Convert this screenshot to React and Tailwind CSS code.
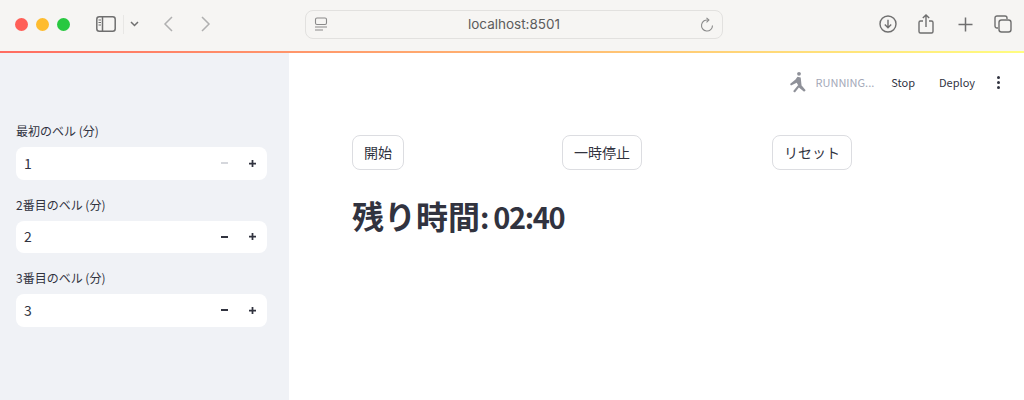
import React from "react";

const font = "font-['Noto_Sans_CJK_JP','Noto_Sans',sans-serif]";

const TrafficLights = () => (
  <div className="flex items-center gap-[8px]">
    <div className="w-[13px] h-[13px] rounded-full bg-[#ff5f57]" />
    <div className="w-[13px] h-[13px] rounded-full bg-[#febc2e]" />
    <div className="w-[13px] h-[13px] rounded-full bg-[#28c840]" />
  </div>
);

const SidebarIcon = () => (
  <svg width="20" height="16" viewBox="0 0 20 16" fill="none" stroke="#6f6f6f" strokeWidth="1.5">
    <rect x="0.8" y="0.8" width="18.4" height="14.4" rx="2.5" />
    <path d="M6.500 1v14" />
    <path d="M2.500 4h2.500M2.500 6.500h2.500M2.500 9h2.500" strokeWidth="1" />
  </svg>
);

const Chevron = ({ d, color = "#b0b0b0", w = 10, h = 16, sw = 1.5 }) => (
  <svg width={w} height={h} viewBox={`0 0 ${w} ${h}`} fill="none" stroke={color} strokeWidth={sw}>
    <path d={d} />
  </svg>
);

const BrowserBar = () => (
  <div className="flex items-center h-[51px] pb-[3px] bg-[#f6f5f3] shrink-0">
    <div className="ml-[15px]">
      <TrafficLights />
    </div>
    <div className="ml-[26px] flex items-center">
      <SidebarIcon />
      <div className="ml-[7px] w-px h-[19px] bg-[#e8e7e5]" />
      <div className="ml-[6px]">
        <Chevron d="M1 1l3.500 3.500L8 1" color="#6f6f6f" w={9} h={6} />
      </div>
    </div>
    <div className="ml-[24px]">
      <Chevron d="M9 1L2 8l7 7" />
    </div>
    <div className="ml-[28px]">
      <Chevron d="M1 1l7 7-7 7" />
    </div>
    <div className="ml-[94px] w-[418px] h-[29px] rounded-[8px] border border-[#e2e1df] flex items-center justify-between px-[8px]">
      <svg width="14" height="15" viewBox="0 0 14 15" fill="none" stroke="#8a8a8a" strokeWidth="1.1">
        <rect x="1.500" y="1" width="11" height="6.500" rx="1.500" />
        <path d="M1 10h12M1 13h8" />
      </svg>
      <span className="font-['Inter',sans-serif] text-[13.5px] text-[#5c5c5c]">localhost:8501</span>
      <svg width="14" height="15" viewBox="0 0 14 15" fill="none" stroke="#8a8a8a" strokeWidth="1.1">
        <path d="M12.500 8.500a5.500 5.500 0 1 1-4-5.300" />
        <path d="M6.500 0.800l2.400 2.300-2.400 2.300" />
      </svg>
    </div>
    <div className="ml-auto mr-[12px] flex items-center">
      <svg width="18" height="18" viewBox="0 0 18 18" fill="none" stroke="#6f6f6f" strokeWidth="1.4">
        <circle cx="9" cy="9" r="8" />
        <path d="M9 4.800v8M5.800 9.600L9 12.800l3.200-3.200" />
      </svg>
      <svg className="ml-[21px]" width="16" height="20" viewBox="0 0 16 20" fill="none" stroke="#6f6f6f" strokeWidth="1.4">
        <path d="M5 7H2.500A1.500 1.500 0 0 0 1 8.500v9A1.500 1.500 0 0 0 2.500 19h11a1.500 1.500 0 0 0 1.500-1.500v-9A1.500 1.500 0 0 0 13.500 7H11" />
        <path d="M8 13V1M4.800 4L8 1l3.200 3" />
      </svg>
      <svg className="ml-[24px]" width="15" height="15" viewBox="0 0 15 15" fill="none" stroke="#6f6f6f" strokeWidth="1.500">
        <path d="M7.500 0.500v14M0.500 7.500h14" />
      </svg>
      <svg className="ml-[21px]" width="18" height="18" viewBox="0 0 18 18" fill="none" stroke="#6f6f6f" strokeWidth="1.4">
        <path d="M4 13H3a2 2 0 0 1-2-2V3a2 2 0 0 1 2-2h8a2 2 0 0 1 2 2v1" />
        <rect x="5" y="5" width="12" height="12" rx="2.500" />
      </svg>
    </div>
  </div>
);

const NumberField = ({ label, value, minusDisabled }) => (
  <div>
    <div className="text-[12px] leading-[16px] text-[#31333f] h-[16px]">{label}</div>
    <div className="mt-[8px] h-[32.5px] bg-white rounded-[8px] flex items-center pl-[8px] pr-[11px]">
      <span className="text-[14px] text-[#31333f]">{value}</span>
      <div className="ml-auto flex items-center gap-[21px]">
        <div className={`w-[7px] h-[2px] ${minusDisabled ? "bg-[#d5d7dc]" : "bg-[#31333f]"}`} />
        <svg width="7" height="7" viewBox="0 0 8 8" fill="#31333f">
          <path d="M3 0h2v3h3v2H5v3H3V5H0V3h3z" />
        </svg>
      </div>
    </div>
  </div>
);

const Sidebar = () => (
  <div className="w-[289px] shrink-0 bg-[#f0f2f6] pt-[70px] px-[16px]">
    <div className="w-[251px] flex flex-col gap-[17px]">
      <NumberField label="最初のベル (分)" value="1" minusDisabled />
      <NumberField label="2番目のベル (分)" value="2" />
      <NumberField label="3番目のベル (分)" value="3" />
    </div>
  </div>
);

const RunningIcon = () => (
  <svg width="17" height="22" viewBox="0 0 17 22" fill="#8f9199">
    <circle cx="10" cy="2.800" r="1.900" />
    <path d="M8.500 5.800l3.200.7.8 7.500-3.200.6-1.600-2.800-5.700 2.700-1-1.500 5.500-4.500z" />
    <path d="M9 14.300l2.800-.8 4.900 5.700-1.600 1.500-5.200-4.300-4 5-1.800-1.200z" />
  </svg>
);

const Toolbar = () => (
  <div className="h-[60px] pb-[2px] flex items-center justify-end">
    <RunningIcon />
    <span className="ml-[10px] text-[11px] text-[#a3a8b8]">RUNNING...</span>
    <span className="ml-[17px] text-[11px] text-[#31333f]">Stop</span>
    <span className="ml-[24px] text-[11px] text-[#31333f]">Deploy</span>
    <div className="ml-[22px] mr-[24px] flex flex-col gap-[2px]">
      <div className="w-[3px] h-[3px] rounded-full bg-[#31333f]" />
      <div className="w-[3px] h-[3px] rounded-full bg-[#31333f]" />
      <div className="w-[3px] h-[3px] rounded-full bg-[#31333f]" />
    </div>
  </div>
);

const Btn = ({ children }) => (
  <button className="h-[35px] px-[11px] rounded-[8px] border border-[#dcdde1] bg-white text-[14px] text-[#31333f]">
    {children}
  </button>
);

export default function App() {
  return (
    <div className={`w-[1024px] h-[400px] flex flex-col overflow-hidden bg-white ${font}`}>
      <BrowserBar />
      <div className="h-[2px] shrink-0 bg-[linear-gradient(90deg,#ff6c62,#fffd80)]" />
      <div className="flex flex-1">
        <Sidebar />
        <div className="flex-1">
          <Toolbar />
          <div className="pl-[63px] pt-[22px]">
            <div className="grid grid-cols-[210px_210px_210px]">
              <div><Btn>開始</Btn></div>
              <div><Btn>一時停止</Btn></div>
              <div><Btn>リセット</Btn></div>
            </div>
            <h1 className="mt-[22px] text-[32px] leading-[46px] font-semibold text-[#31333f]">
              残り時間<span className="text-[29px] tracking-[-1.4px]">: 02:40</span>
            </h1>
          </div>
        </div>
      </div>
    </div>
  );
}
